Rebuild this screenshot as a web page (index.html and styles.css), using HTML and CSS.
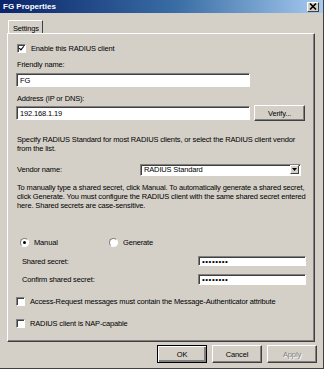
FILE: index.html
```html
<!DOCTYPE html>
<html lang="en">
<head>
    <meta charset="UTF-8">
    <title>FG Properties</title>
    <link rel="stylesheet" href="styles.css">
</head>
<body>
<div class="window">
    <div class="titlebar">
        <span class="title">FG Properties</span>
        <span class="close">
            <svg width="8" height="7" viewBox="0 0 8 7"><path d="M1 0.5 L7 6.5 M7 0.5 L1 6.5" stroke="#000" stroke-width="1.6"/></svg>
        </span>
    </div>

    <div class="tabs">
        <div class="tab">Settings</div>
    </div>

    <div class="panel">
        <div class="row check-row enable">
            <span class="box checked"></span>
            <span>Enable this RADIUS client</span>
        </div>

        <div class="label friendly">Friendly name:</div>
        <div class="field wide">FG</div>

        <div class="label address">Address (IP or DNS):</div>
        <div class="row address-row">
            <div class="field wide">192.168.1.19</div>
            <div class="btn verify">Verify...</div>
        </div>

        <p class="note specify">Specify RADIUS Standard for most RADIUS clients, or select the RADIUS client vendor from the list.</p>

        <div class="row vendor-row">
            <span class="vendor-label">Vendor name:</span>
            <div class="select">
                <span>RADIUS Standard</span>
                <span class="arrow"><svg width="5" height="3" viewBox="0 0 5 3"><path d="M0 0 H5 L2.5 3 Z" fill="#000"/></svg></span>
            </div>
        </div>

        <p class="note manual-note">To manually type a shared secret, click Manual. To automatically generate a shared secret, click Generate. You must configure the RADIUS client with the same shared secret entered here. Shared secrets are case-sensitive.</p>

        <div class="row radio-row">
            <span class="radio-item"><span class="radio on"></span>Manual</span>
            <span class="radio-item gen"><span class="radio"></span>Generate</span>
        </div>

        <div class="row secret-row shared">
            <span>Shared secret:</span>
            <div class="field secret">••••••••</div>
        </div>
        <div class="row secret-row confirm">
            <span>Confirm shared secret:</span>
            <div class="field secret">••••••••</div>
        </div>

        <div class="row check-row access">
            <span class="box"></span>
            <span>Access-Request messages must contain the Message-Authenticator attribute</span>
        </div>
        <div class="row check-row nap">
            <span class="box"></span>
            <span>RADIUS client is NAP-capable</span>
        </div>
    </div>

    <div class="footer">
        <div class="btn default">OK</div>
        <div class="btn">Cancel</div>
        <div class="btn disabled">Apply</div>
    </div>
</div>
</body>
</html>
```

FILE: styles.css
```css
/* classic dialog look */
body {
    margin: 0;
    background: #d4d0c8;
    font-family: "Liberation Sans", Arial, sans-serif;
    font-size: 7.5px;
    letter-spacing: -0.15px;
    color: #000;
}
.window {
    width: 324px;
    height: 369px;
    box-sizing: border-box;
    border-right: 1px solid #404040;
    border-bottom: 1px solid #404040;
}
.titlebar {
    height: 13px;
    background: linear-gradient(to right, #0a246a, #3a6ea5 55%, #a6caf0);
    display: flex;
    align-items: center;
    justify-content: space-between;
    padding: 0 4px 0 3px;
}
.title {
    color: #fff;
    font-weight: bold;
    font-size: 8px;
    letter-spacing: 0;
}
.close {
    width: 10px;
    height: 8px;
    background: #d4d0c8;
    border: 1px solid;
    border-color: #fff #404040 #404040 #fff;
    display: flex;
    align-items: center;
    justify-content: center;
}
.tabs {
    padding: 7px 0 0 8px;
    height: 13px;
}
.tab {
    width: 35px;
    height: 13px;
    box-sizing: border-box;
    border: 1px solid;
    border-color: #fff #404040 transparent #fff;
    border-bottom: none;
    padding: 3px 0 0 4px;
    position: relative;
    z-index: 1;
    background: #d4d0c8;
}
.panel {
    margin: 0 8px 0 7px;
    height: 309px;
    box-sizing: border-box;
    border: 1px solid;
    border-color: #fff #404040 #404040 #fff;
    box-shadow: inset -1px -1px 0 #808080;
    padding: 0 8px;
}
.row {
    display: flex;
    align-items: center;
}
.label {
    height: 10px;
    line-height: 10px;
    padding-left: 1px;
}
.field {
    background: #fff;
    border: 1px solid;
    border-color: #808080 #fff #fff #808080;
    box-shadow: inset 1px 1px 0 #404040;
    box-sizing: border-box;
    padding-left: 3px;
    display: flex;
    align-items: center;
}
.field.wide {
    width: 234px;
    height: 14px;
}
.check-row {
    height: 11px;
}
.box {
    width: 7px;
    height: 7px;
    background: #fff;
    border: 1px solid;
    border-color: #808080 #fff #fff #808080;
    box-shadow: inset 1px 1px 0 #404040;
    margin-right: 5px;
    position: relative;
}
.box.checked::after {
    content: "";
    position: absolute;
    left: 2px;
    top: 0;
    width: 2px;
    height: 4px;
    border: solid #000;
    border-width: 0 1.5px 1.5px 0;
    transform: rotate(40deg);
}
.enable {
    margin-top: 9px;
    padding-left: 1px;
}
.friendly {
    margin-top: 6px;
}
.friendly + .field {
    margin-top: 3px;
}
.address {
    margin-top: 7px;
}
.address-row {
    margin-top: 1px;
    height: 16px;
}
.btn {
    width: 51px;
    height: 18px;
    box-sizing: border-box;
    border: 1px solid;
    border-color: #fff #404040 #404040 #fff;
    box-shadow: inset -1px -1px 0 #808080;
    display: flex;
    align-items: center;
    justify-content: center;
}
.verify {
    height: 16px;
    margin-left: 4px;
}
.note {
    margin: 0;
    line-height: 9px;
    padding-left: 1px;
}
.specify {
    margin-top: 14px;
}
.vendor-row {
    margin-top: 10px;
    height: 13px;
    padding-left: 1px;
}
.vendor-label {
    width: 123px;
}
.select {
    width: 161px;
    height: 12px;
    box-sizing: border-box;
    background: #fff;
    border: 1px solid;
    border-color: #808080 #fff #fff #808080;
    box-shadow: inset 1px 1px 0 #404040;
    display: flex;
    align-items: center;
    justify-content: space-between;
    padding-left: 3px;
}
.arrow {
    width: 9px;
    height: 9px;
    margin-right: 1px;
    background: #d4d0c8;
    box-sizing: border-box;
    border: 1px solid;
    border-color: #fff #404040 #404040 #fff;
    display: flex;
    align-items: center;
    justify-content: center;
}
.manual-note {
    margin-top: 7px;
}
.radio-row {
    margin-top: 27px;
    height: 10px;
    padding-left: 4px;
}
.radio-item {
    display: flex;
    align-items: center;
    width: 89px;
}
.radio {
    width: 7px;
    height: 7px;
    border-radius: 50%;
    background: #fff;
    border: 1px solid;
    border-color: #808080 #fff #fff #808080;
    margin-right: 5px;
    position: relative;
}
.radio.on::after {
    content: "";
    position: absolute;
    left: 2px;
    top: 2px;
    width: 3px;
    height: 3px;
    border-radius: 50%;
    background: #000;
}
.secret-row {
    padding-left: 6px;
    justify-content: space-between;
}
.shared {
    margin-top: 9px;
    height: 10px;
}
.confirm {
    margin-top: 8px;
    height: 11px;
}
.field.secret {
    width: 108px;
    height: 100%;
    font-size: 8px;
    letter-spacing: 0.5px;
}
.access {
    margin-top: 11px;
}
.nap {
    margin-top: 11px;
}
.footer {
    display: flex;
    gap: 4px;
    padding: 3px 0 0 157px;
}
.footer .btn {
    width: 50px;
}
.footer .btn + .btn {
    margin-left: 1px;
}
.btn.default {
    border: 1px solid #000;
    box-shadow: inset 1px 1px 0 #fff, inset -2px -2px 0 #808080;
}
.btn.disabled {
    color: #808080;
    text-shadow: 1px 1px 0 #fff;
}
```
